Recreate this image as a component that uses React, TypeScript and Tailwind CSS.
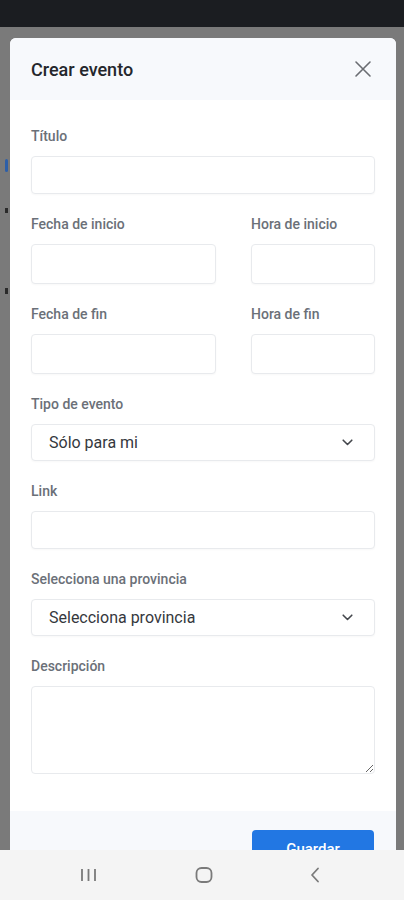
import React from "react";

const font = { fontFamily: "Roboto, 'Noto Sans', Arial, sans-serif" };

function Label({ children }: { children: React.ReactNode }) {
  return (
    <label className="block h-[20px] mb-[10px] text-[14px] leading-[20px] font-medium text-[#6b7078]">
      {children}
    </label>
  );
}

function Input({ tall }: { tall?: boolean }) {
  return (
    <div
      className={
        (tall ? "h-[40px]" : "h-[38px]") +
        " w-full rounded-[4px] border border-[#e8eaed] bg-white shadow-[0_1px_2px_rgba(0,0,0,0.03)]"
      }
    />
  );
}

function Select({ value }: { value: string }) {
  return (
    <div className="h-[37px] w-full rounded-[4px] border border-[#e8eaed] bg-white flex items-center justify-between pl-[17px] pr-[21px] shadow-[0_1px_2px_rgba(0,0,0,0.03)]">
      <span className="text-[16px] text-[#35383d]">{value}</span>
      <svg width="11" height="7" viewBox="0 0 11 7" fill="none">
        <path d="M1.2 1.2 5.5 5.5l4.3-4.3" stroke="#44474c" strokeWidth="1.6" strokeLinecap="round" strokeLinejoin="round" />
      </svg>
    </div>
  );
}

export default function App() {
  return (
    <div className="w-[404px] h-[900px] flex flex-col overflow-hidden bg-[#7a7a7a]" style={font}>
      {/* status bar */}
      <div className="h-[27px] bg-[#1b1d21] shrink-0" />

      {/* page under the overlay */}
      <div className="relative flex-1 overflow-hidden bg-[#7a7a7a] pt-[11px] pl-[10px] pr-[8px]">
        <div className="absolute left-[5px] top-[132px] w-[3px] h-[13px] rounded-sm bg-[#2d5fa8]" />
        <div className="absolute left-[5px] top-[181px] w-[3px] h-[5px] bg-[#2a2a2a]" />
        <div className="absolute left-[5px] top-[261px] w-[3px] h-[6px] bg-[#2a2a2a]" />

        {/* modal */}
        <div className="bg-white rounded-t-[6px] overflow-hidden">
          <div className="h-[62px] bg-[#f7f9fc] flex items-center justify-between pl-[21px] pr-[24px]">
            <h2 className="text-[18px] font-medium text-[#24272c]">Crear evento</h2>
            <svg width="18" height="18" viewBox="0 0 18 18" fill="none">
              <path d="M2 2l14 14M16 2 2 16" stroke="#6a6d72" strokeWidth="1.6" strokeLinecap="round" />
            </svg>
          </div>

          <div className="px-[21px] pt-[26px] pb-[37px]">
            <Label>Título</Label>
            <Input />

            <div className="grid grid-cols-[185px_1fr] gap-x-[35px] mt-[20px]">
              <div>
                <Label>Fecha de inicio</Label>
                <Input tall />
              </div>
              <div>
                <Label>Hora de inicio</Label>
                <Input tall />
              </div>
            </div>

            <div className="grid grid-cols-[185px_1fr] gap-x-[35px] mt-[20px]">
              <div>
                <Label>Fecha de fin</Label>
                <Input tall />
              </div>
              <div>
                <Label>Hora de fin</Label>
                <Input tall />
              </div>
            </div>

            <div className="mt-[20px]">
              <Label>Tipo de evento</Label>
              <Select value="Sólo para mi" />
            </div>

            <div className="mt-[20px]">
              <Label>Link</Label>
              <Input />
            </div>

            <div className="mt-[20px]">
              <Label>Selecciona una provincia</Label>
              <Select value="Selecciona provincia" />
            </div>

            <div className="mt-[20px]">
              <Label>Descripción</Label>
              <textarea className="block w-full h-[88px] rounded-[4px] border border-[#e8eaed] bg-white outline-none" />
            </div>
          </div>

          <div className="bg-[#f7f9fc] flex justify-end px-[22px] pt-[19px] pb-[18px]">
            <button className="w-[122px] h-[38px] rounded-[4px] bg-[#2277e3] text-white text-[15px] font-medium">
              Guardar
            </button>
          </div>
        </div>
      </div>

      {/* android nav bar */}
      <div className="h-[50px] shrink-0 bg-[#f4f4f4] flex items-center justify-between pl-[80px] pr-[84px]">
        <svg width="17" height="14" viewBox="0 0 17 14" fill="none">
          <path d="M2 1v12M8.5 1v12M15 1v12" stroke="#7a7a7a" strokeWidth="1.8" />
        </svg>
        <svg width="18" height="18" viewBox="0 0 18 18" fill="none">
          <rect x="1.5" y="2" width="15" height="14" rx="5" stroke="#7a7a7a" strokeWidth="1.8" />
        </svg>
        <svg width="10" height="16" viewBox="0 0 10 16" fill="none">
          <path d="M8 1.5 2 8l6 6.5" stroke="#7a7a7a" strokeWidth="1.8" strokeLinecap="round" strokeLinejoin="round" />
        </svg>
      </div>
    </div>
  );
}
